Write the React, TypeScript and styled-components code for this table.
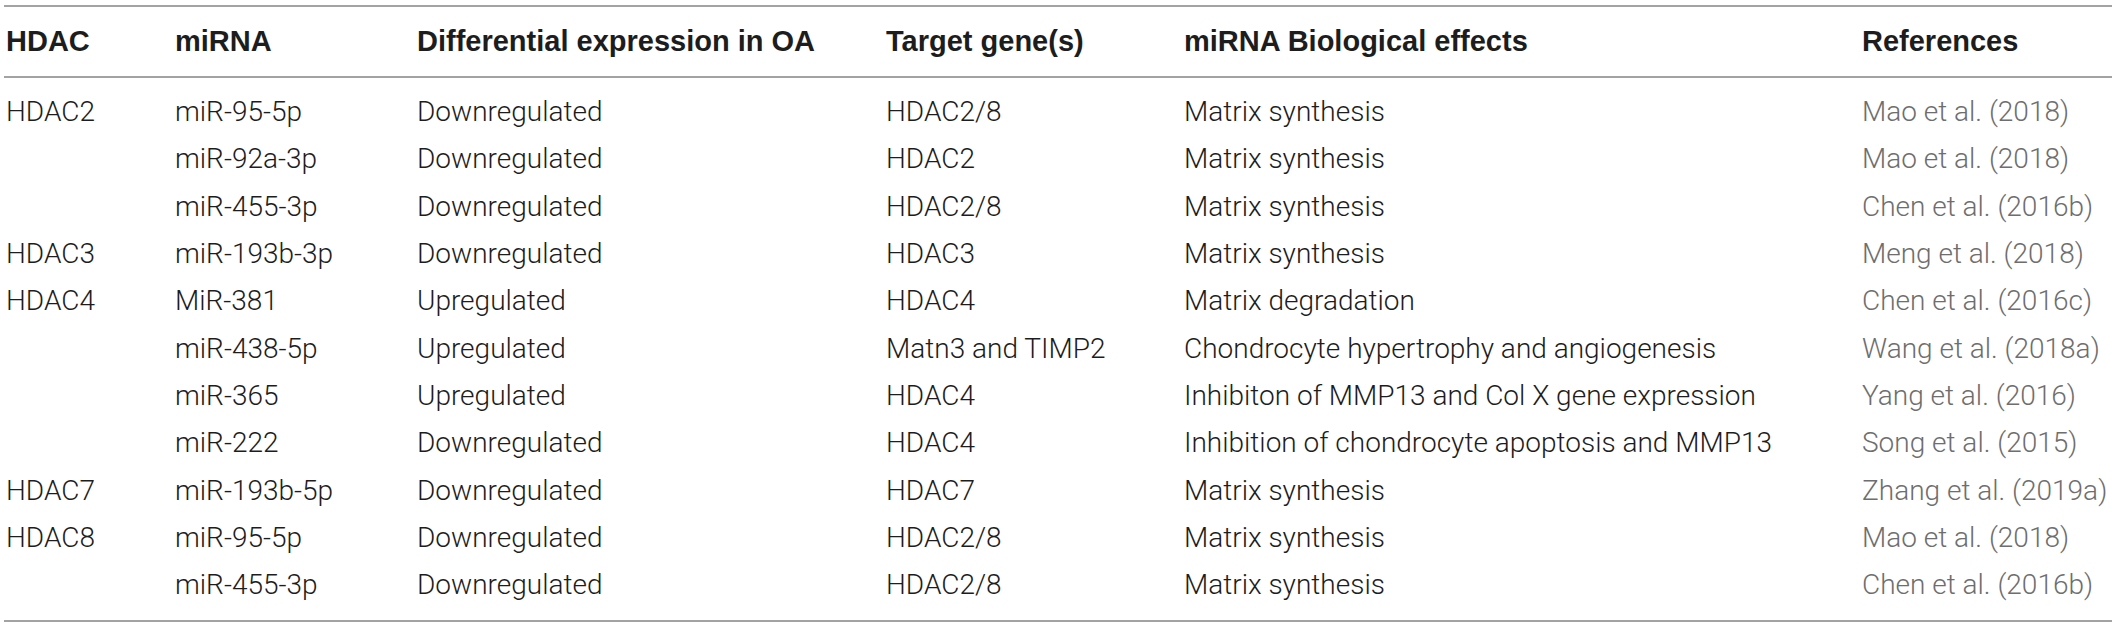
import React from "react";
import styled, { createGlobalStyle } from "styled-components";

const Global = createGlobalStyle`
  html, body { margin: 0; padding: 0; background: #ffffff; }
  body { font-family: Roboto, "Liberation Sans", Arial, sans-serif; }
`;

const Table = styled.div`
  margin: 5px 5px 0 4px;
  border-top: 2px solid #a3a3a3;
  border-bottom: 2px solid #a3a3a3;
`;

const cols = "169px 242px 469px 298px 678px 1fr";

const HeadRow = styled.div`
  display: grid;
  grid-template-columns: ${cols};
  height: 69px;
  align-items: center;
  border-bottom: 2px solid #a3a3a3;
`;

const HeadCell = styled.div`
  padding-left: 2px;
  font-family: "Liberation Sans", Arial, sans-serif;
  font-weight: 700;
  font-size: 29px;
  color: #1d1d1d;
  white-space: nowrap;
`;

const Body = styled.div`
  padding: 10px 0 12px;
`;

const Row = styled.div`
  display: grid;
  grid-template-columns: ${cols};
  height: 47.3px;
  align-items: center;
`;

const Cell = styled.div<{ $muted?: boolean }>`
  padding-left: 2px;
  font-family: Roboto, "Liberation Sans", Arial, sans-serif;
  font-weight: 300;
  font-size: 28px;
  color: ${(p) => (p.$muted ? "#6e6e6e" : "#1d1d1d")};
  white-space: nowrap;
`;

const headers = [
  "HDAC",
  "miRNA",
  "Differential expression in OA",
  "Target gene(s)",
  "miRNA Biological effects",
  "References",
];

const rows: string[][] = [
  ["HDAC2", "miR-95-5p", "Downregulated", "HDAC2/8", "Matrix synthesis", "Mao et al. (2018)"],
  ["", "miR-92a-3p", "Downregulated", "HDAC2", "Matrix synthesis", "Mao et al. (2018)"],
  ["", "miR-455-3p", "Downregulated", "HDAC2/8", "Matrix synthesis", "Chen et al. (2016b)"],
  ["HDAC3", "miR-193b-3p", "Downregulated", "HDAC3", "Matrix synthesis", "Meng et al. (2018)"],
  ["HDAC4", "MiR-381", "Upregulated", "HDAC4", "Matrix degradation", "Chen et al. (2016c)"],
  ["", "miR-438-5p", "Upregulated", "Matn3 and TIMP2", "Chondrocyte hypertrophy and angiogenesis", "Wang et al. (2018a)"],
  ["", "miR-365", "Upregulated", "HDAC4", "Inhibiton of MMP13 and Col X gene expression", "Yang et al. (2016)"],
  ["", "miR-222", "Downregulated", "HDAC4", "Inhibition of chondrocyte apoptosis and MMP13", "Song et al. (2015)"],
  ["HDAC7", "miR-193b-5p", "Downregulated", "HDAC7", "Matrix synthesis", "Zhang et al. (2019a)"],
  ["HDAC8", "miR-95-5p", "Downregulated", "HDAC2/8", "Matrix synthesis", "Mao et al. (2018)"],
  ["", "miR-455-3p", "Downregulated", "HDAC2/8", "Matrix synthesis", "Chen et al. (2016b)"],
];

export default function App() {
  return (
    <>
      <Global />
      <Table>
        <HeadRow>
          {headers.map((h) => (
            <HeadCell key={h}>{h}</HeadCell>
          ))}
        </HeadRow>
        <Body>
          {rows.map((r, i) => (
            <Row key={i}>
              {r.map((c, j) => (
                <Cell key={j} $muted={j === 5}>
                  {c}
                </Cell>
              ))}
            </Row>
          ))}
        </Body>
      </Table>
    </>
  );
}
